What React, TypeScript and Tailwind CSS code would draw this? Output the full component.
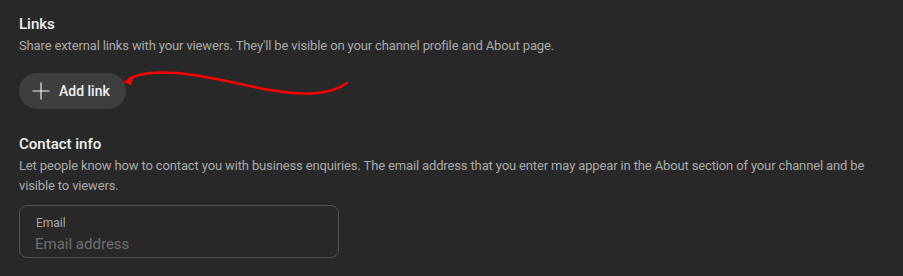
import React from 'react'

function PlusIcon() {
  return (
    <svg width="24" height="24" viewBox="0 0 24 24" className="shrink-0">
      <path d="M12 3.5v17M3.5 12h17" stroke="#f1f1f1" strokeWidth="1.2" fill="none" />
    </svg>
  )
}

export default function App() {
  return (
    <div
      className="relative h-[276px] w-full overflow-hidden bg-[#282828] px-[19px] pt-3"
      style={{ fontFamily: 'Roboto, "Noto Sans", sans-serif' }}
    >
      <section>
        <h2 className="text-[15px] font-medium leading-6 text-[#f1f1f1]">Links</h2>
        <p className="text-[13px] leading-5 tracking-[-0.14px] text-[#aaaaaa]">
          Share external links with your viewers. They'll be visible on your channel profile and About page.
        </p>
        <button className="mt-[17px] flex h-9 items-center gap-[6px] rounded-full bg-[#3e3e3e] pl-[10px] pr-4 text-[14px] font-medium text-[#f1f1f1]">
          <PlusIcon />
          Add link
        </button>
      </section>

      <section className="mt-[23px]">
        <h2 className="text-[15px] font-medium leading-6 text-[#f1f1f1]">Contact info</h2>
        <p className="text-[13px] leading-5 tracking-[-0.14px] text-[#aaaaaa]">
          Let people know how to contact you with business enquiries. The email address that you enter may appear in the About section of your channel and be visible to viewers.
        </p>
        <div className="mt-[9px] flex h-[53px] w-[320px] flex-col rounded-lg border border-[#525252] px-4 pt-[9px]">
          <label className="text-[12px] leading-4 text-[#aaaaaa]">Email</label>
          <input
            placeholder="Email address"
            className="mt-[3px] -ml-px bg-transparent text-[15px] leading-5 text-[#f1f1f1] outline-none placeholder:text-[#717171]"
          />
        </div>
      </section>

      <svg
        className="pointer-events-none absolute left-0 top-0"
        width="903"
        height="276"
        viewBox="0 0 903 276"
      >
        <path
          d="M347 83 C 330 95 305 96 270 90 C 230 83 190 70 150 73 C 140 74 135 76 130 78"
          stroke="#ff0000"
          strokeWidth="2.4"
          fill="none"
          strokeLinecap="round"
        />
        <path d="M123 82 L134 75 L131 85 Z" fill="#ff0000" />
      </svg>
    </div>
  )
}
